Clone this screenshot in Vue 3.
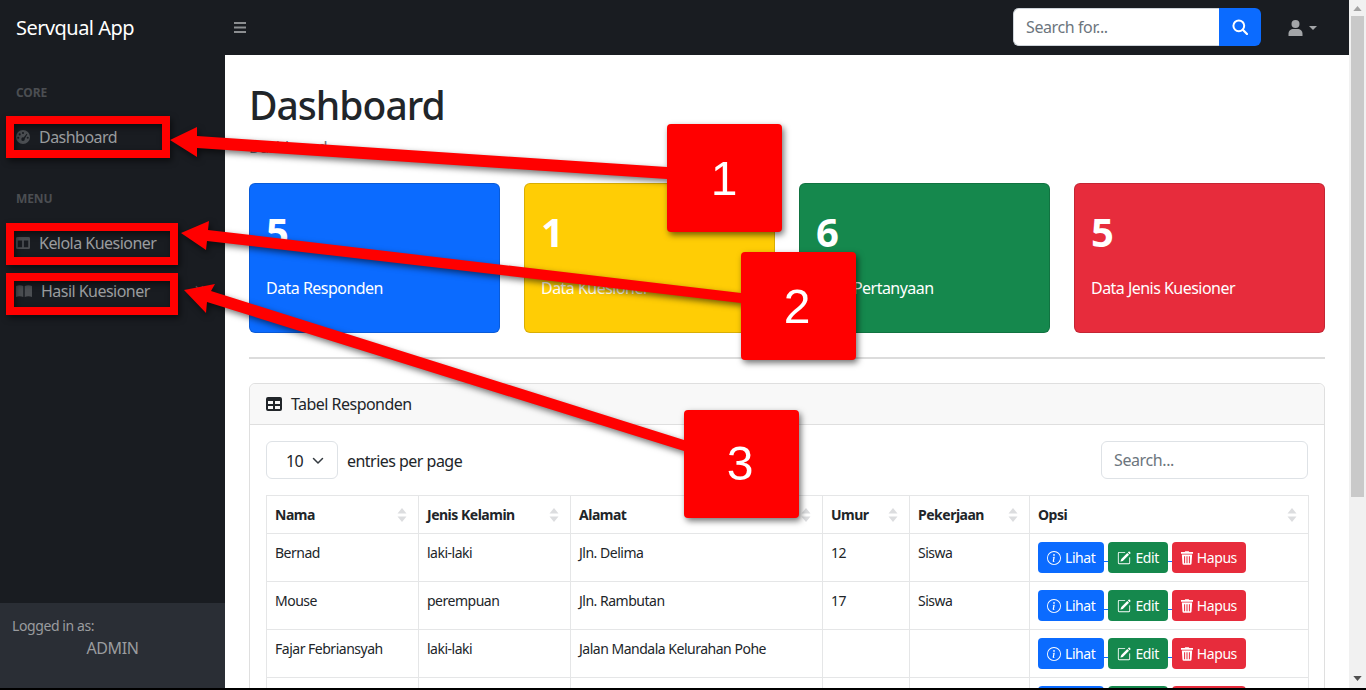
<script setup>
const cards = [
  { n: 5, label: 'Data Responden', tone: 'blue' },
  { n: 1, label: 'Data Kuesioner', tone: 'yellow' },
  { n: 6, label: 'Data Pertanyaan', tone: 'green' },
  { n: 5, label: 'Data Jenis Kuesioner', tone: 'red' },
]
const columns = ['Nama', 'Jenis Kelamin', 'Alamat', 'Umur', 'Pekerjaan', 'Opsi']
const rows = [
  ['Bernad', 'laki-laki', 'Jln. Delima', '12', 'Siswa'],
  ['Mouse', 'perempuan', 'Jln. Rambutan', '17', 'Siswa'],
  ['Fajar Febriansyah', 'laki-laki', 'Jalan Mandala Kelurahan Pohe', '', ''],
  ['', '', '', '', ''],
]
const squares = [
  { x: 667, y: 124, n: '1', tx: 724, ty: 195 },
  { x: 741, y: 252, n: '2', tx: 797, ty: 323 },
  { x: 684, y: 410, n: '3', tx: 740, ty: 480 },
]
</script>

<template>
  <div class="frame">
    <div class="page">
      <header class="topbar">
        <div class="brand">Servqual App</div>
        <svg class="bars" viewBox="0 0 12 11" width="12" height="11"><path d="M0 0h12v2H0zM0 4.5h12v2H0zM0 9h12v2H0z" /></svg>
        <div class="nav-search">
          <input class="nav-input" placeholder="Search for..." />
          <button class="nav-btn">
            <svg viewBox="0 0 16 16" width="16" height="16" fill="none" stroke="#fff"><circle cx="6.8" cy="6.8" r="5.4" stroke-width="2" /><path d="M10.8 10.8 15 15" stroke-width="2.2" stroke-linecap="round" /></svg>
          </button>
        </div>
        <div class="user">
          <svg viewBox="0 0 14 16" width="15" height="16" fill="#a3a5a8"><circle cx="7" cy="4" r="4" /><path d="M0 16v-2.2C0 11 2.2 9 5 9h4c2.8 0 5 2 5 4.8V16z" /></svg>
          <span class="caret"></span>
        </div>
      </header>
      <div class="body">
        <aside class="sidebar">
          <div class="heading">CORE</div>
          <div class="link">
            <svg class="ico" viewBox="0 0 16 16" width="14" height="14"><path fill="#4b4e52" fill-rule="evenodd" d="M8 0a8 8 0 1 1 0 16A8 8 0 0 1 8 0zm0 2.2a1.2 1.2 0 1 0 0 2.4 1.2 1.2 0 0 0 0-2.4zM4.2 3.8a1.2 1.2 0 1 0 0 2.4 1.2 1.2 0 0 0 0-2.4zM2.6 7.6a1.2 1.2 0 1 0 0 2.4 1.2 1.2 0 0 0 0-2.4zm10.8 0a1.2 1.2 0 1 0 0 2.4 1.2 1.2 0 0 0 0-2.4zm-1.2-3.4L8.7 8.6A2 2 0 1 0 10 10l3-5.2z" /></svg>
            <span>Dashboard</span>
          </div>
          <div class="heading">MENU</div>
          <div class="link">
            <svg class="ico" viewBox="0 0 16 14" width="14" height="12" preserveAspectRatio="none"><path fill="#4b4e52" fill-rule="evenodd" d="M1.5 0h13A1.5 1.5 0 0 1 16 1.5v11a1.5 1.5 0 0 1-1.5 1.5h-13A1.5 1.5 0 0 1 0 12.5v-11A1.5 1.5 0 0 1 1.5 0zM2 4v8h5V4zm7 0v8h5V4z" /></svg>
            <span>Kelola Kuesioner</span>
          </div>
          <div class="link">
            <svg class="ico" viewBox="0 0 18 14" width="16" height="12" preserveAspectRatio="none"><path fill="#4b4e52" d="M0 1.2C2.5.2 5.6 0 8.2 1.2V14C5.6 13 2.5 13 0 14zM9.8 1.2c2.6-1.2 5.7-1 8.2 0V14c-2.5-1-5.6-1-8.2 0z" /></svg>
            <span>Hasil Kuesioner</span>
            <svg class="chev" viewBox="0 0 10 6" width="9" height="6" fill="none" stroke="#4b4e52" stroke-width="1.6"><path d="m1 1 4 4 4-4" /></svg>
          </div>
          <div class="footer">
            <div class="small">Logged in as:</div>
            <div class="who">ADMIN</div>
          </div>
        </aside>
        <main class="main">
          <h1 class="title">Dashboard</h1>
          <div class="crumb">Dashboard</div>
          <section class="cards">
            <article v-for="c in cards" :key="c.label" class="stat" :class="c.tone">
              <div class="num">{{ c.n }}</div>
              <div class="lbl">{{ c.label }}</div>
            </article>
          </section>
          <hr class="rule" />
          <section class="panel">
            <div class="panel-head">
              <svg viewBox="0 0 16 14" width="16" height="14"><path fill="#212529" fill-rule="evenodd" d="M2 0h12a2 2 0 0 1 2 2v10a2 2 0 0 1-2 2H2a2 2 0 0 1-2-2V2a2 2 0 0 1 2-2zm0 4v3h5V4zm7 0v3h5V4zM2 9v3h5V9zm7 0v3h5V9z" /></svg>
              <span>Tabel Responden</span>
            </div>
            <div class="panel-body">
              <div class="tools">
                <div class="select">
                  <span>10</span>
                  <svg viewBox="0 0 12 8" width="12" height="8" fill="none" stroke="#343a40" stroke-width="1.5" stroke-linecap="round" stroke-linejoin="round"><path d="m1.5 1.5 4.5 4.5 4.5-4.5" /></svg>
                </div>
                <span class="entries">entries per page</span>
                <input class="tbl-search" placeholder="Search..." />
              </div>
              <table class="tbl">
                <colgroup>
                  <col class="c1" /><col class="c1" /><col class="c3" /><col class="c4" /><col class="c5" /><col class="c6" />
                </colgroup>
                <thead>
                  <tr>
                    <th v-for="h in columns" :key="h">
                      <div class="th-in">
                        <span>{{ h }}</span>
                        <svg viewBox="0 0 10 14" width="10" height="14" fill="#dcdddf"><path d="M5 0 9.5 5.5H.5zM5 14 .5 8.5h9z" /></svg>
                      </div>
                    </th>
                  </tr>
                </thead>
                <tbody>
                  <tr v-for="(r, i) in rows" :key="i">
                    <td v-for="(v, j) in r" :key="j">{{ v }}</td>
                    <td class="actions">
                      <div class="btns">
                        <button class="b b-blue">
                          <svg viewBox="0 0 16 16" width="14" height="14" fill="#fff"><path d="M8 15A7 7 0 1 1 8 1a7 7 0 0 1 0 14zm0 1A8 8 0 1 0 8 0a8 8 0 0 0 0 16z" /><path d="m8.93 6.588-2.29.287-.082.38.45.083c.294.07.352.176.288.469l-.738 3.468c-.194.897.105 1.319.808 1.319.545 0 1.178-.252 1.465-.598l.088-.416c-.2.176-.492.246-.686.246-.275 0-.375-.193-.304-.533L8.93 6.588zM9 4.5a1 1 0 1 1-2 0 1 1 0 0 1 2 0z" /></svg>
                          Lihat
                        </button>
                        <span class="tie"></span>
                        <button class="b b-green">
                          <svg viewBox="0 0 16 16" width="14" height="14" fill="#fff"><path d="M15.502 1.94a.5.5 0 0 1 0 .706L14.459 3.69l-2-2L13.502.646a.5.5 0 0 1 .707 0l1.293 1.293zm-1.75 2.456-2-2L4.939 9.21a.5.5 0 0 0-.121.196l-.805 2.414a.25.25 0 0 0 .316.316l2.414-.805a.5.5 0 0 0 .196-.12l6.813-6.814z" /><path fill-rule="evenodd" d="M1 13.5A1.5 1.5 0 0 0 2.5 15h11a1.5 1.5 0 0 0 1.5-1.5v-6a.5.5 0 0 0-1 0v6a.5.5 0 0 1-.5.5h-11a.5.5 0 0 1-.5-.5v-11a.5.5 0 0 1 .5-.5H9a.5.5 0 0 0 0-1H2.5A1.5 1.5 0 0 0 1 2.5v11z" /></svg>
                          Edit
                        </button>
                        <span class="tie"></span>
                        <button class="b b-red">
                          <svg viewBox="0 0 14 16" width="12" height="14" fill="#fff"><path fill-rule="evenodd" d="M5 0h4l.7 1H14v2H0V1h4.3zM1 4h12l-.7 10.5A1.6 1.6 0 0 1 10.7 16H3.3a1.6 1.6 0 0 1-1.6-1.5zm2.6 2v8h1.2V6zm2.8 0v8h1.2V6zm2.8 0v8h1.2V6z" /></svg>
                          Hapus
                        </button>
                      </div>
                    </td>
                  </tr>
                </tbody>
              </table>
            </div>
          </section>
        </main>
      </div>
    </div>
    <div class="scroll">
      <svg viewBox="0 0 10 6" width="9" height="5" fill="#a3a3a3"><path d="M5 0 10 6H0z" /></svg>
      <div class="thumb"></div>
      <svg class="down" viewBox="0 0 10 6" width="9" height="5" fill="#505050"><path d="M5 6 0 0h10z" /></svg>
    </div>
    <svg class="marks" viewBox="0 0 1366 690" width="1366" height="690">
      <g class="shadowed">
        <rect x="10" y="120" width="156" height="34" fill="none" stroke="#f00" stroke-width="8" />
        <rect x="10" y="227" width="164" height="34" fill="none" stroke="#f00" stroke-width="8" />
        <rect x="10" y="277" width="164" height="34" fill="none" stroke="#f00" stroke-width="8" />
        <path d="M170 140 197 127 197 136 667 167 667 179 197 148 197 157Z" fill="#f00" />
        <path d="M181 233 209 221 208 230 741 293 741 303 207 241 206 250Z" fill="#f00" />
        <path d="M184 290 215 284 211 291 684 440 684 451 207 302 206 313Z" fill="#f00" />
        <g v-for="s in squares" :key="s.n">
          <rect :x="s.x" :y="s.y" width="115" height="108" rx="4" fill="#f00" />
          <text :x="s.tx" :y="s.ty" class="mark-n" text-anchor="middle">{{ s.n }}</text>
        </g>
      </g>
    </svg>
  </div>
</template>

<style>
html, body { margin: 0; background: #000; overflow: hidden; }
</style>

<style scoped>
.frame {
  position: relative;
  display: flex;
  height: 688px;
  overflow: hidden;
  background: #fff;
  color: #212529;
  font-family: "Noto Sans", "Open Sans", sans-serif;
  font-size: 16px;
  line-height: 1.5;
  letter-spacing: -0.033em;
}
.page { flex: 1; min-width: 0; display: flex; flex-direction: column; }
.topbar {
  height: 55px;
  flex: none;
  display: flex;
  align-items: center;
  background: #191c21;
}
.brand { width: 234px; box-sizing: border-box; padding-left: 16px; color: #fff; font-size: 20px; }
.bars { fill: #8c8e91; }
.nav-search { display: flex; margin-left: auto; margin-bottom: 1px; height: 38px; }
.nav-input {
  width: 206px;
  box-sizing: border-box;
  border: 1px solid #ced4da;
  border-right: 0;
  border-radius: 6px 0 0 6px;
  padding: 0 12px;
  font: inherit;
  letter-spacing: -0.025em;
  background: #fff;
  outline: none;
}
.nav-input::placeholder, .tbl-search::placeholder { color: #6c757d; opacity: 1; }
.nav-btn {
  width: 42px;
  border: 0;
  padding: 0;
  display: flex;
  align-items: center;
  justify-content: center;
  border-radius: 0 6px 6px 0;
  background: #0b6bff;
}
.user { width: 88px; display: flex; align-items: center; padding-left: 27px; box-sizing: border-box; gap: 6px; }
.caret { width: 0; height: 0; border: 4.5px solid transparent; border-top-color: #a3a5a8; border-bottom: 0; }
.body { flex: 1; min-height: 0; display: flex; }
.sidebar { width: 225px; flex: none; display: flex; flex-direction: column; background: #191c21; color: #9a9c9f; }
.heading { padding: 29px 16px 11px; font-size: 12px; font-weight: 700; color: #4b4e52; line-height: 18px; letter-spacing: -0.01em; }
.link { display: flex; align-items: center; padding: 12px 16px; line-height: 24px; height: 24px; }
.ico { flex: none; margin-right: 9px; }
.chev { margin-left: auto; margin-right: 5px; margin-top: -7px; }
.footer { margin-top: auto; height: 85px; box-sizing: border-box; padding: 12px; background: #2a2e35; letter-spacing: -0.025em; }
.small { font-size: 14px; line-height: 21px; }
.who { text-align: center; line-height: 24px; }
.main { flex: 1; min-width: 0; padding: 24px 24px 0; overflow: hidden; box-sizing: border-box; }
.title { margin: 2px 0 6px; font-size: 39px; font-weight: 500; line-height: 48px; letter-spacing: -0.025em; color: #212529; }
.crumb { margin-bottom: 24px; color: #6c757d; line-height: 24px; }
.cards { display: grid; grid-template-columns: repeat(4, 251px); gap: 24px; }
.stat { height: 150px; box-sizing: border-box; padding: 24px 16px; border-radius: 6px; color: #fff; border: 1px solid rgba(0, 0, 0, 0.15); }
.num { font-size: 40px; font-weight: 700; line-height: 48px; margin-bottom: 20px; }
.lbl { line-height: 24px; }
.blue { background: #0b6bff; }
.yellow { background: #ffcd05; }
.green { background: #15884d; }
.red { background: #e72c3c; }
.rule { margin: 24px 0; height: 2px; border: 0; background: #dcdcdc; }
.panel { border: 1px solid #dfdfdf; border-radius: 6px; }
.panel-head {
  height: 40px;
  display: flex;
  align-items: center;
  gap: 9px;
  padding: 0 16px;
  background: #f8f8f8;
  border-bottom: 1px solid #dfdfdf;
  border-radius: 6px 6px 0 0;
}
.panel-body { padding: 16px; }
.tools { display: flex; align-items: center; height: 38px; margin-bottom: 16px; }
.select {
  width: 72px;
  height: 38px;
  box-sizing: border-box;
  border: 1px solid #dee2e6;
  border-radius: 6px;
  display: flex;
  align-items: center;
  padding: 1px 0 0 19px;
  gap: 9px;
}
.entries { margin-left: 9px; padding-top: 2px; }
.tbl-search {
  margin-left: auto;
  width: 207px;
  height: 38px;
  box-sizing: border-box;
  border: 1px solid #dee2e6;
  border-radius: 6px;
  padding: 0 12px;
  font: inherit;
  letter-spacing: -0.025em;
  outline: none;
}
.tbl { width: 1042px; table-layout: fixed; border-collapse: collapse; font-size: 14px; line-height: 20px; letter-spacing: -0.035em; }
.c1 { width: 152px; }
.c3 { width: 252px; }
.c4 { width: 87px; }
.c5 { width: 120px; }
.c6 { width: 279px; }
th, td { border: 1px solid #e5e6e7; padding: 9px 8px; vertical-align: top; text-align: left; }
th { padding: 8px 11px 8px 8px; height: 38px; box-sizing: border-box; vertical-align: middle; font-weight: 700; }
td { height: 48px; box-sizing: border-box; }
.th-in { display: flex; align-items: center; justify-content: space-between; }
.actions { padding: 8px; }
.btns { display: flex; align-items: center; }
.tie { width: 4px; height: 1px; margin-top: 8px; background: #0b6bff; }
.b {
  height: 31px;
  box-sizing: border-box;
  display: flex;
  align-items: center;
  gap: 4px;
  padding: 0 9px;
  border: 0;
  border-radius: 4px;
  color: #fff;
  font: inherit;
  font-size: 14px;
  letter-spacing: -0.03em;
}
.b-blue { background: #0b6bff; }
.b-green { background: #15884d; }
.b-red { background: #e72c3c; }
.scroll {
  width: 17px;
  flex: none;
  position: relative;
  display: flex;
  flex-direction: column;
  align-items: center;
  padding-top: 6px;
  box-sizing: border-box;
  background: #f1f1f1;
}
.thumb { width: 13px; height: 481px; margin-top: 5px; background: #c9c9c9; }
.down { margin-top: auto; margin-bottom: 7px; }
.marks { position: absolute; left: 0; top: 0; pointer-events: none; }
.shadowed { filter: drop-shadow(2px 3px 3px rgba(0, 0, 0, 0.55)); }
.mark-n { font-family: "Liberation Sans", Arial, sans-serif; font-size: 48px; fill: #fff; letter-spacing: 0; }
</style>
